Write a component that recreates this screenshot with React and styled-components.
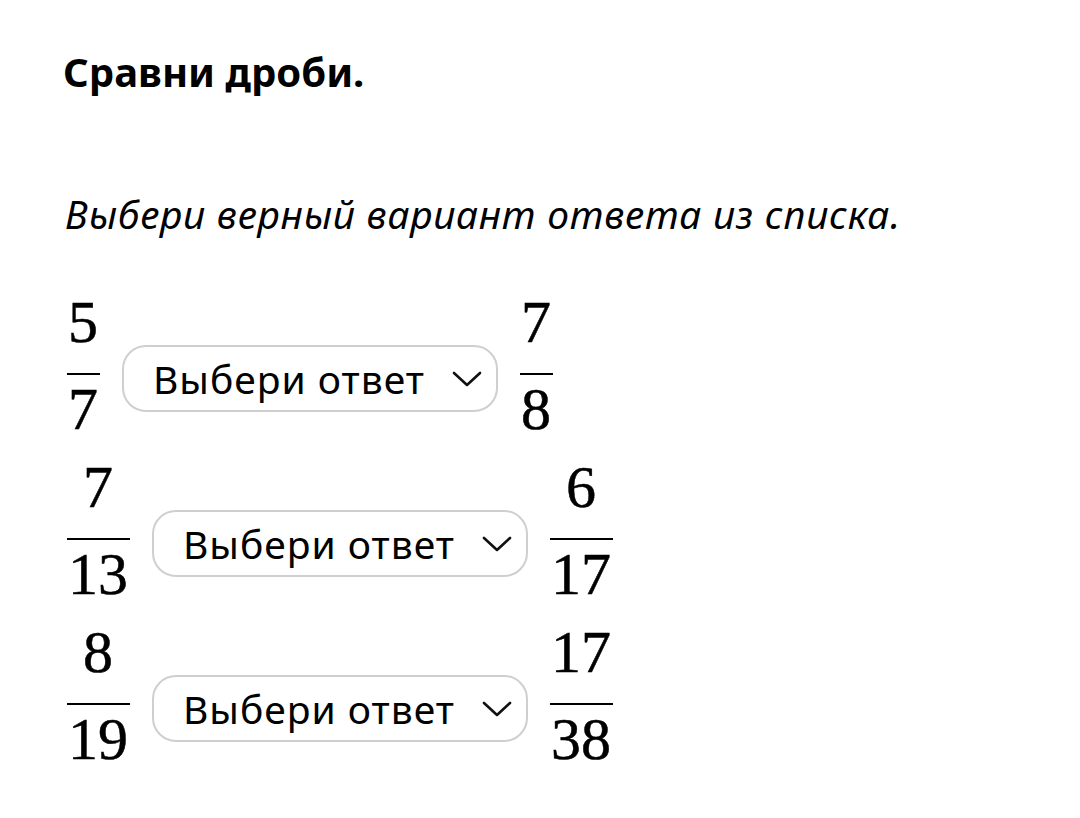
import React from "react";
import styled, { createGlobalStyle } from "styled-components";

const GlobalStyle = createGlobalStyle`
  body {
    margin: 0;
    background: #fff;
    color: #000;
    font-family: "Noto Sans", "Open Sans", sans-serif;
  }
`;

const Page = styled.div`
  padding: 42px 0 0 63px;
`;

const Title = styled.h1`
  margin: 0;
  font-size: 40px;
  font-weight: 700;
  line-height: 60px;
`;

const Hint = styled.p`
  margin: 82px 0 0 2px;
  font-size: 39px;
  font-style: italic;
  letter-spacing: 0.7px;
  line-height: 60px;
`;

const Rows = styled.div`
  display: flex;
  flex-direction: column;
  gap: 18px;
  margin-top: 48px;
  padding-left: 4px;
`;

const Row = styled.div`
  display: flex;
  align-items: flex-start;
  gap: 22px;
`;

const FractionBox = styled.div`
  display: inline-flex;
  flex-direction: column;
  align-items: stretch;
  font-family: "Liberation Serif", "DejaVu Serif", serif;
  font-size: 60px;
  line-height: 60px;
  text-align: center;
  -webkit-text-stroke: 0.5px #000;
`;

const Numerator = styled.div`
  padding: 0 2px 21px 1px;
`;

const Bar = styled.div`
  height: 2px;
  background: #000;
`;

const Denominator = styled.div`
  padding: 4px 2px 0 1px;
`;

const Select = styled.div`
  display: flex;
  align-items: center;
  justify-content: space-between;
  box-sizing: border-box;
  width: 376px;
  height: 67px;
  margin-top: 53px;
  padding: 0 14px 0 29px;
  border: 2px solid #cfcfcf;
  border-radius: 24px;
  font-size: 39px;
  letter-spacing: 1px;
  white-space: nowrap;
`;

const Chevron = () => (
  <svg width="30" height="16" viewBox="0 0 30 16">
    <polyline
      points="2,2 15,14 28,2"
      fill="none"
      stroke="#111"
      strokeWidth="2.6"
      strokeLinecap="round"
      strokeLinejoin="round"
    />
  </svg>
);

const Fraction = ({ num, den }) => (
  <FractionBox>
    <Numerator>{num}</Numerator>
    <Bar />
    <Denominator>{den}</Denominator>
  </FractionBox>
);

const pairs = [
  [5, 7, 7, 8],
  [7, 13, 6, 17],
  [8, 19, 17, 38],
];

export default function App() {
  return (
    <Page>
      <GlobalStyle />
      <Title>Сравни дроби.</Title>
      <Hint>Выбери верный вариант ответа из списка.</Hint>
      <Rows>
        {pairs.map(([a, b, c, d], i) => (
          <Row key={i}>
            <Fraction num={a} den={b} />
            <Select>
              <span>Выбери ответ</span>
              <Chevron />
            </Select>
            <Fraction num={c} den={d} />
          </Row>
        ))}
      </Rows>
    </Page>
  );
}
